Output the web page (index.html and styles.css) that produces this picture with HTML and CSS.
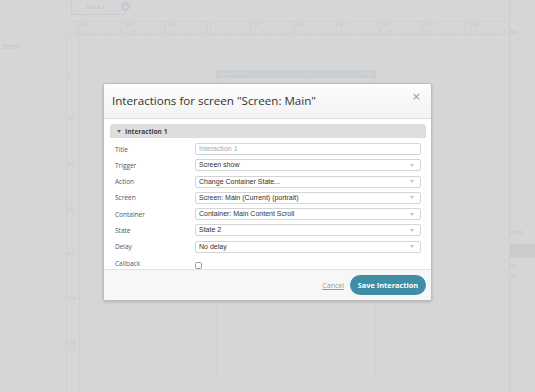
FILE: index.html
```html
<!DOCTYPE html>
<html>
<head>
<meta charset="utf-8">
<link rel="stylesheet" href="styles.css">
</head>
<body>
<div class="app">
  <aside class="sidebar">
    <div class="side-top"></div>
    <div class="side-item">Scroll</div>
  </aside>
  <main class="work">
    <div class="tabs">
      <div class="tab">State 1<span class="tab-plus">+</span></div>
    </div>
    <div class="ruler-h">
      <span>-600</span><span>-400</span><span>-200</span><span>0</span><span>200</span><span>400</span><span>600</span><span>800</span><span>1000</span><span>1200</span>
    </div>
    <div class="canvas">
      <div class="ruler-v">
        <span>0</span><span>200</span><span>400</span><span>600</span><span>800</span><span>1000</span><span>1200</span>
      </div>
      <div class="stage">
        <div class="statusbar"><span>●●●● PROTOIO</span><span>9:41</span><span>100%</span></div>
        <div class="phone"></div>
      </div>
    </div>
  </main>
  <aside class="rpanel">
    <div class="rp-line">Bu</div>
    <div class="rp-line rp-low">Prop</div>
    <div class="rp-thumb"></div>
    <div class="rp-line rp-small">Lo</div>
    <div class="rp-line rp-small">Sh</div>
  </aside>
</div>

<div class="modal">
  <div class="modal-head">
    <h1 class="modal-title">Interactions for screen "Screen: Main"</h1>
    <span class="modal-close">×</span>
  </div>
  <div class="modal-body">
    <div class="section-head"><span class="caret"></span>Interaction 1</div>
    <div class="form">
      <div class="row"><label>Title</label><div class="field placeholder">Interaction 1</div></div>
      <div class="row"><label>Trigger</label><div class="field select">Screen show<span class="arrow"></span></div></div>
      <div class="row"><label>Action</label><div class="field select">Change Container State...<span class="arrow"></span></div></div>
      <div class="row"><label>Screen</label><div class="field select">Screen: Main (Current) (portrait)<span class="arrow"></span></div></div>
      <div class="row"><label>Container</label><div class="field select">Container: Main Content Scroll<span class="arrow"></span></div></div>
      <div class="row"><label>State</label><div class="field select">State 2<span class="arrow"></span></div></div>
      <div class="row"><label>Delay</label><div class="field select">No delay<span class="arrow"></span></div></div>
      <div class="row"><label>Callback</label><div class="check"></div></div>
    </div>
  </div>
  <div class="modal-foot">
    <a class="cancel">Cancel</a>
    <button class="save">Save Interaction</button>
  </div>
</div>
</body>
</html>
```
FILE: styles.css
```css
* { box-sizing: border-box; }
html, body { margin: 0; padding: 0; }
body {
  width: 535px;
  height: 392px;
  overflow: hidden;
  background: #d6d6d6;
  font-family: "Open Sans", "Liberation Sans", sans-serif;
  position: relative;
}
.app {
  display: flex;
  width: 535px;
  height: 392px;
}
.sidebar {
  width: 64px;
  display: flex;
  flex-direction: column;
}
.side-top { height: 42px; }
.side-item {
  font-size: 7px;
  color: #c2c2c2;
  padding-left: 2px;
}
.work {
  flex: 1;
  display: flex;
  flex-direction: column;
}
.tabs {
  height: 21px;
  padding-left: 7px;
  display: flex;
  align-items: flex-start;
}
.tab {
  width: 55px;
  height: 15px;
  border: 1px solid #c9cdd2;
  border-top: none;
  border-radius: 0 0 3px 3px;
  font-size: 6px;
  color: #c4c4c4;
  padding-left: 14px;
  line-height: 14px;
  display: flex;
  justify-content: space-between;
}
.tab-plus {
  width: 9px;
  height: 9px;
  border-radius: 50%;
  background: #c3cbd0;
  color: #e0e0e0;
  font-size: 8px;
  line-height: 9px;
  text-align: center;
  margin-top: 2px;
  margin-right: -5px;
}
.ruler-h {
  height: 14px;
  margin-left: 2px;
  width: 442px;
  border-top: 1px solid #d0d0d0;
  border-bottom: 1px solid #d0d0d0;
  background: repeating-linear-gradient(90deg, transparent 0 4px, #d0d0d0 4px 5px);
  background-size: 100% 5px;
  background-repeat: no-repeat;
  background-position: bottom;
  display: flex;
  padding-left: 12px;
  font-size: 4px;
  color: #c6c6c6;
}
.ruler-h span { width: 44px; border-left: 1px solid #d0d0d0; padding-left: 2px; }
.canvas {
  flex: 1;
  display: flex;
}
.ruler-v {
  width: 14px;
  margin-left: 2px;
  border-right: 1px solid #d0d0d0;
  border-left: 1px solid #d0d0d0;
  display: flex;
  flex-direction: column;
  padding-top: 36px;
  font-size: 4px;
  color: #c6c6c6;
}
.ruler-v span { height: 45px; }
.stage {
  flex: 1;
  display: flex;
  flex-direction: column;
  align-items: flex-start;
  padding-left: 136px;
  padding-top: 35px;
}
.statusbar {
  width: 160px;
  height: 8px;
  background: #c7cfd2;
  font-size: 4px;
  color: #d8dde0;
  display: flex;
  justify-content: space-between;
  padding: 0 6px;
  line-height: 8px;
}
.phone {
  width: 160px;
  height: 300px;
  border-left: 1px solid #d0d0d0;
  border-right: 1px solid #d0d0d0;
}
.rpanel {
  width: 26px;
  border-left: 1px solid #cdcdcd;
  display: flex;
  flex-direction: column;
  font-size: 6px;
  color: #c4c4c4;
  padding-top: 28px;
}
.rp-low { margin-top: 192px; }
.rp-thumb {
  margin-top: 8px;
  height: 14px;
  background: #cbcbcb;
}
.rp-small { font-size: 5px; margin-top: 4px; }

/* modal */
.modal {
  position: absolute;
  left: 103px;
  top: 83px;
  width: 329px;
  height: 218px;
  background: #fff;
  border: 1px solid #bdbdbd;
  border-radius: 3px;
  box-shadow: 0 1px 3px rgba(0,0,0,0.18);
  display: flex;
  flex-direction: column;
  overflow: hidden;
}
.modal-head {
  height: 35px;
  flex: none;
  background: linear-gradient(#fdfdfd, #f3f3f3);
  border-bottom: 1px solid #e0e0e0;
  display: flex;
  align-items: center;
  justify-content: space-between;
  padding: 0 10px 0 8px;
}
.modal-title {
  margin: 0;
  font-weight: 400;
  font-size: 11.6px;
  color: #333;
  padding-bottom: 1px;
}
.modal-close {
  font-size: 11px;
  color: #9a9a9a;
  margin-top: -10px;
  font-family: "DejaVu Sans", sans-serif;
}
.modal-body {
  flex: 1;
  padding: 5px 5px 0 6px;
  overflow: hidden;
  background: #fff;
}
.section-head {
  height: 14px;
  background: #dedede;
  border-radius: 3px 3px 0 0;
  font-size: 6.6px;
  font-weight: 700;
  color: #444;
  display: flex;
  align-items: center;
  padding-left: 7px;
}
.caret {
  width: 0;
  height: 0;
  border-left: 2px solid transparent;
  border-right: 2px solid transparent;
  border-top: 3px solid #666;
  margin-right: 4px;
}
.form {
  padding: 5px 0 0 5px;
  display: flex;
  flex-direction: column;
  gap: 4.3px;
}
.row {
  display: flex;
  align-items: center;
  height: 12px;
}
.row label {
  width: 80px;
  font-size: 6.5px;
  color: #555;
}
.field {
  width: 226px;
  height: 12px;
  border: 1px solid #d4d4d4;
  border-radius: 2px;
  font-family: "Liberation Sans", Arial, sans-serif;
  font-size: 7px;
  color: #333;
  line-height: 10px;
  padding-left: 3px;
  display: flex;
  justify-content: space-between;
  align-items: center;
  background: #fff;
}
.placeholder { color: #aaa; }
.arrow {
  width: 0;
  height: 0;
  border-left: 2px solid transparent;
  border-right: 2px solid transparent;
  border-top: 3px solid #c2c2c2;
  margin-right: 6px;
}
.check {
  width: 7px;
  height: 7px;
  border: 1px solid #999;
  border-radius: 1.5px;
  margin-top: 5px;
}
.modal-foot {
  height: 31px;
  flex: none;
  border-top: 1px solid #e3e3e3;
  background: #f7f7f7;
  display: flex;
  align-items: center;
  justify-content: flex-end;
  padding-right: 5px;
  gap: 6px;
}
.cancel {
  font-size: 7px;
  color: #999;
  text-decoration: underline;
}
.save {
  width: 76px;
  height: 20px;
  border: none;
  border-radius: 10px;
  background: #3f8ea6;
  color: #fff;
  font-family: "Open Sans", sans-serif;
  font-weight: 700;
  font-size: 7.4px;
  padding: 0;
}
```
